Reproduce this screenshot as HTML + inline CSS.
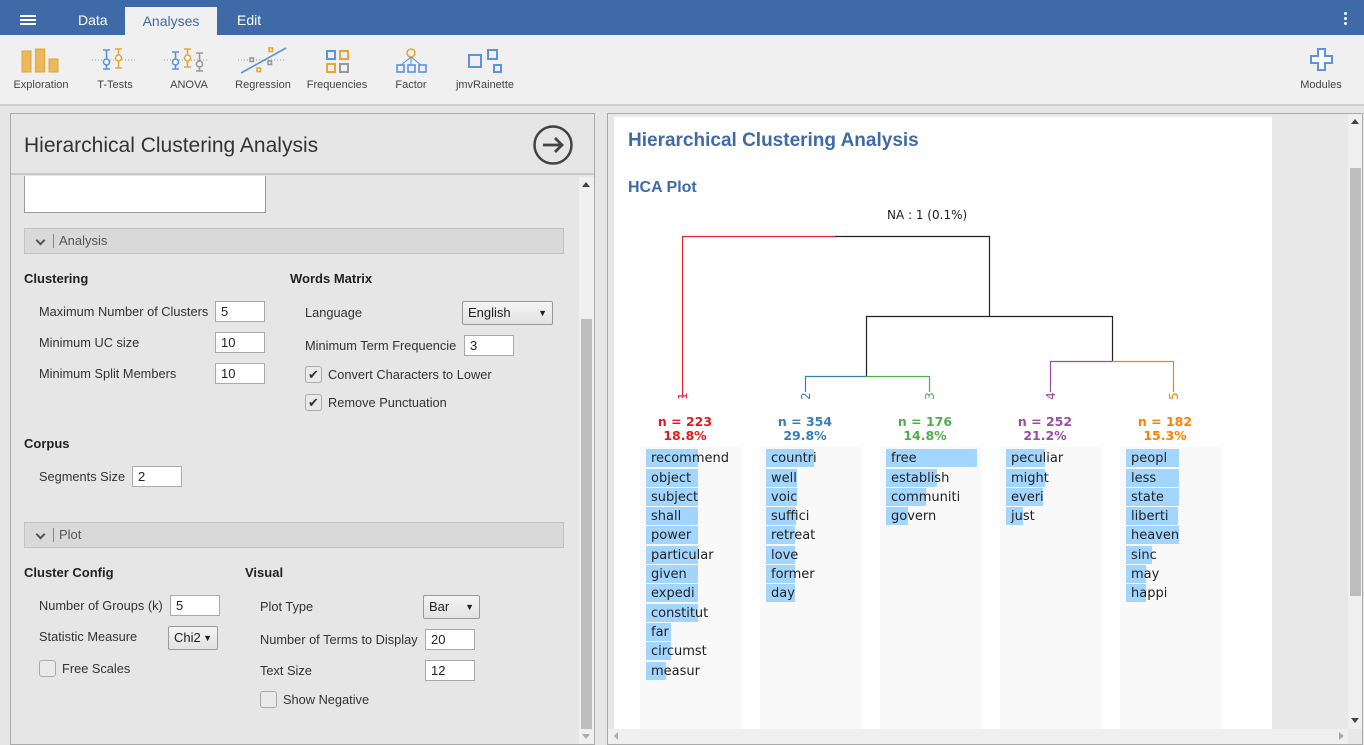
<!DOCTYPE html>
<html><head><meta charset="utf-8"><style>
*{margin:0;padding:0;box-sizing:border-box}
body{width:1364px;height:745px;overflow:hidden;background:#e6e6e6;font-family:"Liberation Sans",sans-serif;font-size:13px;color:#333;position:relative}
.a{position:absolute}
.lbl{position:absolute;line-height:16px;font-size:12.8px;color:#333;white-space:nowrap}
.h{position:absolute;font-weight:bold;font-size:13px;color:#222;line-height:16px}
.in{position:absolute;background:#fff;border:1px solid #aaa;height:21px;font-size:13px;line-height:19px;padding-left:5px;color:#222}
.sel{position:absolute;background:#eee;border:1px solid #999;border-radius:2px;height:24px;font-size:13px;line-height:22px;padding-left:5px;color:#222;background:linear-gradient(#f4f4f4,#e2e2e2)}
.sel:after{content:"▼";position:absolute;right:5px;top:0;font-size:9px}
.cb{position:absolute;width:17px;height:17px;border:1px solid #aaa;border-radius:3px;background:#e9e9e9}
.sec{position:absolute;left:24px;width:540px;height:26px;background:#d9d9d9;border:1px solid #c2c2c2;color:#555;font-size:13px;line-height:24px;padding-left:34px}
.sec:before{content:"";position:absolute;left:12px;top:8px;width:5px;height:5px;border-right:2px solid #555;border-bottom:2px solid #555;transform:rotate(45deg)}
.sec:after{content:"";position:absolute;left:28px;top:5px;width:1px;height:14px;background:#888}
.tb{position:absolute;top:79px;font-size:11px;color:#444;text-align:center;width:80px}
.col{position:absolute;top:447px;width:102px;height:282px;background:#f9f9f9}
.w{position:absolute;height:18px;font-family:"DejaVu Sans",sans-serif;font-size:13px;line-height:18px;color:#222;white-space:nowrap}
.w i{position:absolute;left:0;top:0;height:18px;background:#a3d6ff;z-index:0}
.w span{position:relative;left:5px;top:1px;z-index:1}
.ns{position:absolute;top:415px;width:100px;text-align:center;font-family:"DejaVu Sans",sans-serif;font-size:12.5px;line-height:14px;font-weight:bold}
</style></head><body>
<div class="a" style="left:0;top:0;width:1364px;height:35px;background:#3e6ba8"></div>
<div class="a" style="left:20px;top:15px;width:16px;height:2px;background:#fff;box-shadow:0 4px 0 #fff,0 8px 0 #fff"></div>
<div class="a" style="left:78px;top:12px;color:#fff;font-size:14px">Data</div>
<div class="a" style="left:125px;top:7px;width:92px;height:28px;background:#f0f0f0;color:#3e6ba8;font-size:14px;text-align:center;line-height:28px">Analyses</div>
<div class="a" style="left:237px;top:12px;color:#fff;font-size:14px">Edit</div>
<div class="a" style="left:1344px;top:12px;width:3px;height:3px;background:#fff;border-radius:50%;box-shadow:0 5px 0 #fff,0 10px 0 #fff"></div>
<div class="a" style="left:0;top:35px;width:1364px;height:71px;background:#f0f0f0;border-bottom:2px solid #d0d0d0"></div>
<svg class="a" style="left:0;top:35px" width="1364" height="44">
<g fill="#ecb95a" stroke="#e2a43a"><rect x="22" y="16" width="9" height="21"/><rect x="35.5" y="14" width="9" height="23"/><rect x="49" y="24" width="9" height="13"/></g>
<g stroke="#999" stroke-dasharray="1 2"><line x1="92" y1="25" x2="136" y2="25"/><line x1="164" y1="25" x2="208" y2="25"/><line x1="238" y1="25" x2="286" y2="25"/></g>
<g fill="none" stroke-width="1.6"><path d="M103 15h7M106.5 15v19M103 34h7" stroke="#5b93e0"/><circle cx="106.5" cy="27" r="3" fill="#fff" stroke="#5b93e0"/>
<path d="M115 14h7M118.5 14v19M115 33h7" stroke="#e5a73b"/><circle cx="118.5" cy="23" r="3" fill="#fff" stroke="#e5a73b"/>
<path d="M172 17h7M175.5 17v17M172 34h7" stroke="#5b93e0"/><circle cx="175.5" cy="27" r="3" fill="#fff" stroke="#5b93e0"/>
<path d="M184 14h7M187.5 14v18M184 32h7" stroke="#e5a73b"/><circle cx="187.5" cy="23" r="3" fill="#fff" stroke="#e5a73b"/>
<path d="M196 18h7M199.5 18v18M196 36h7" stroke="#999"/><circle cx="199.5" cy="29" r="3" fill="#fff" stroke="#999"/>
<line x1="241" y1="38" x2="286" y2="13" stroke="#5b93e0"/><rect x="250" y="23" width="3.5" height="3.5" stroke="#999"/><rect x="268" y="26" width="3.5" height="3.5" stroke="#999"/><rect x="257" y="33" width="3.5" height="3.5" stroke="#e5a73b"/><rect x="269" y="13" width="3.5" height="3.5" stroke="#e5a73b"/>
<rect x="327" y="16" width="8" height="8" stroke="#5b93e0" stroke-width="2"/><rect x="340" y="16" width="8" height="8" stroke="#e5a73b" stroke-width="2"/><rect x="327" y="29" width="8" height="8" stroke="#e5a73b" stroke-width="2"/><rect x="340" y="29" width="8" height="8" stroke="#999" stroke-width="2"/>
<circle cx="411" cy="18" r="4" stroke="#e5a73b"/><path d="M411 22v8M411 22l-10 8M411 22l10 8" stroke="#5b93e0" stroke-width="1"/><rect x="397" y="30" width="7" height="7" stroke="#5b93e0"/><rect x="408" y="30" width="7" height="7" stroke="#5b93e0"/><rect x="419" y="30" width="7" height="7" stroke="#5b93e0"/>
<rect x="469" y="20" width="12" height="12" stroke="#5b93e0" stroke-width="2"/><rect x="488" y="15" width="9" height="9" stroke="#5b93e0" stroke-width="2"/><rect x="494" y="30" width="7" height="7" stroke="#5b93e0" stroke-width="2"/>
<path d="M1318 14h7v7h7v7h-7v7h-7v-7h-7v-7h7z" stroke="#5b93e0" stroke-width="2" fill="#fff"/></g>
</svg>
<div class="tb" style="left:1px">Exploration</div><div class="tb" style="left:75px">T-Tests</div><div class="tb" style="left:149px">ANOVA</div><div class="tb" style="left:223px">Regression</div><div class="tb" style="left:297px">Frequencies</div><div class="tb" style="left:371px">Factor</div><div class="tb" style="left:445px">jmvRainette</div><div class="tb" style="left:1281px">Modules</div>
<div class="a" style="left:10px;top:113px;width:585px;height:632px;border:1px solid #aaa;background:#e6e6e6"></div>
<div class="a" style="left:11px;top:114px;width:583px;height:61px;border-bottom:2px solid #c8c8c8"></div>
<div class="a" style="left:24px;top:134px;font-size:21px;color:#333">Hierarchical Clustering Analysis</div>
<svg class="a" style="left:532px;top:124px" width="42" height="42"><circle cx="21" cy="21" r="18.5" fill="none" stroke="#444" stroke-width="2.5"/><path d="M11 21h19M23 14l7 7-7 7" fill="none" stroke="#444" stroke-width="2.8"/></svg>
<div class="a" style="left:579px;top:177px;width:15px;height:567px;background:#f0f0f0"></div>
<div class="a" style="left:581px;top:319px;width:11px;height:410px;background:#bdbdbd"></div>
<div class="a" style="left:582px;top:182px;width:0;height:0;border-left:4px solid transparent;border-right:4px solid transparent;border-bottom:5px solid #444"></div>
<div class="a" style="left:582px;top:734px;width:0;height:0;border-left:4px solid transparent;border-right:4px solid transparent;border-top:5px solid #aaa"></div>
<div class="a" style="left:24px;top:176px;width:242px;height:37px;background:#fff;border:1px solid #999;border-top:none"></div>
<div class="sec" style="top:228px">Analysis</div>
<div class="h" style="left:24px;top:271px">Clustering</div>
<div class="h" style="left:290px;top:271px">Words Matrix</div>
<div class="lbl" style="left:39px;top:304px">Maximum Number of Clusters</div><div class="in" style="left:215px;top:301px;width:50px">5</div>
<div class="lbl" style="left:39px;top:335px">Minimum UC size</div><div class="in" style="left:215px;top:332px;width:50px">10</div>
<div class="lbl" style="left:39px;top:366px">Minimum Split Members</div><div class="in" style="left:215px;top:363px;width:50px">10</div>
<div class="lbl" style="left:305px;top:305px">Language</div><div class="sel" style="left:462px;top:301px;width:91px">English</div>
<div class="lbl" style="left:305px;top:338px">Minimum Term Frequencie</div><div class="in" style="left:464px;top:335px;width:50px">3</div>
<div class="cb" style="left:305px;top:366px;text-align:center;line-height:15px;font-size:13px;color:#333">✔</div><div class="lbl" style="left:328px;top:367px">Convert Characters to Lower</div>
<div class="cb" style="left:305px;top:394px;text-align:center;line-height:15px;font-size:13px;color:#333">✔</div><div class="lbl" style="left:328px;top:395px">Remove Punctuation</div>
<div class="h" style="left:24px;top:436px">Corpus</div>
<div class="lbl" style="left:39px;top:469px">Segments Size</div><div class="in" style="left:132px;top:466px;width:50px">2</div>
<div class="sec" style="top:522px">Plot</div>
<div class="h" style="left:24px;top:565px">Cluster Config</div>
<div class="h" style="left:245px;top:565px">Visual</div>
<div class="lbl" style="left:39px;top:598px">Number of Groups (k)</div><div class="in" style="left:170px;top:595px;width:50px">5</div>
<div class="lbl" style="left:39px;top:629px">Statistic Measure</div><div class="sel" style="left:168px;top:626px;width:50px">Chi2</div>
<div class="cb" style="left:39px;top:660px"></div><div class="lbl" style="left:62px;top:661px">Free Scales</div>
<div class="lbl" style="left:260px;top:599px">Plot Type</div><div class="sel" style="left:423px;top:595px;width:57px">Bar</div>
<div class="lbl" style="left:260px;top:632px">Number of Terms to Display</div><div class="in" style="left:425px;top:629px;width:50px">20</div>
<div class="lbl" style="left:260px;top:663px">Text Size</div><div class="in" style="left:425px;top:660px;width:50px">12</div>
<div class="cb" style="left:260px;top:691px"></div><div class="lbl" style="left:283px;top:692px">Show Negative</div>
<div class="a" style="left:607px;top:113px;width:756px;height:632px;border:1px solid #aaa;background:#e8e8e8"></div>
<div class="a" style="left:614px;top:117px;width:658px;height:612px;background:#fff"></div>
<div class="a" style="left:1348px;top:114px;width:14px;height:615px;background:#f0f0f0"></div>
<div class="a" style="left:1350px;top:168px;width:11px;height:428px;background:#bdbdbd"></div>
<div class="a" style="left:1351px;top:119px;border-left:4px solid transparent;border-right:4px solid transparent;border-bottom:5px solid #444"></div>
<div class="a" style="left:1351px;top:718px;border-left:4px solid transparent;border-right:4px solid transparent;border-top:5px solid #444"></div>
<div class="a" style="left:608px;top:729px;width:740px;height:15px;background:#f0f0f0"></div>
<div class="a" style="left:1339px;top:732px;border-top:4px solid transparent;border-bottom:4px solid transparent;border-left:5px solid #aaa"></div>
<div class="a" style="left:614px;top:732px;border-top:4px solid transparent;border-bottom:4px solid transparent;border-right:4px solid #aaa"></div>
<div class="a" style="left:628px;top:130px;font-size:19px;font-weight:bold;color:#3e6ba8">Hierarchical Clustering Analysis</div>
<div class="a" style="left:628px;top:179px;font-size:16px;font-weight:bold;color:#3e6ba8">HCA Plot</div>
<div class="a" style="left:887px;top:208px;font-family:'DejaVu Sans',sans-serif;font-size:12px;color:#222">NA : 1 (0.1%)</div>
<svg class="a" style="left:0;top:0" width="1364" height="745" fill="none" stroke-width="1.2">
<path d="M682.5 398V236.5H835" stroke="#e8283a"/><path d="M835 236.5H989.5V316.5" stroke="#222"/>
<path d="M866.5 376V316.5H1112.5V361" stroke="#222"/>
<path d="M805.5 392V376.5H866" stroke="#3b7dbf"/><path d="M866 376.5H929.5V392" stroke="#4caf50"/>
<path d="M1050.5 392V361.5H1112" stroke="#984ea3"/><path d="M1112 361.5H1173.5V392" stroke="#ff7f00"/>
<g font-family="DejaVu Sans" font-size="12" stroke="none">
<text transform="translate(687,396) rotate(-90)" fill="#e8283a" text-anchor="middle">1</text>
<text transform="translate(810,396) rotate(-90)" fill="#3b7dbf" text-anchor="middle">2</text>
<text transform="translate(934,396) rotate(-90)" fill="#4caf50" text-anchor="middle">3</text>
<text transform="translate(1055,396) rotate(-90)" fill="#984ea3" text-anchor="middle">4</text>
<text transform="translate(1178,396) rotate(-90)" fill="#ff7f00" text-anchor="middle">5</text></g>
</svg>
<div class="ns" style="left:635px;color:#e41a1c">n = 223<br>18.8%</div>
<div class="ns" style="left:755px;color:#377eb8">n = 354<br>29.8%</div>
<div class="ns" style="left:875px;color:#4daf4a">n = 176<br>14.8%</div>
<div class="ns" style="left:995px;color:#984ea3">n = 252<br>21.2%</div>
<div class="ns" style="left:1115px;color:#ff7f00">n = 182<br>15.3%</div>
<div class="col" style="left:640px"></div><div class="col" style="left:760px"></div><div class="col" style="left:880px"></div><div class="col" style="left:1000px"></div><div class="col" style="left:1120px"></div>
<div class="w" style="left:646px;top:449px"><i style="width:52px"></i><span>recommend</span></div>
<div class="w" style="left:646px;top:469px"><i style="width:52px"></i><span>object</span></div>
<div class="w" style="left:646px;top:488px"><i style="width:52px"></i><span>subject</span></div>
<div class="w" style="left:646px;top:507px"><i style="width:52px"></i><span>shall</span></div>
<div class="w" style="left:646px;top:526px"><i style="width:52px"></i><span>power</span></div>
<div class="w" style="left:646px;top:546px"><i style="width:52px"></i><span>particular</span></div>
<div class="w" style="left:646px;top:565px"><i style="width:52px"></i><span>given</span></div>
<div class="w" style="left:646px;top:584px"><i style="width:52px"></i><span>expedi</span></div>
<div class="w" style="left:646px;top:604px"><i style="width:52px"></i><span>constitut</span></div>
<div class="w" style="left:646px;top:623px"><i style="width:25px"></i><span>far</span></div>
<div class="w" style="left:646px;top:642px"><i style="width:25px"></i><span>circumst</span></div>
<div class="w" style="left:646px;top:662px"><i style="width:20px"></i><span>measur</span></div>
<div class="w" style="left:766px;top:449px"><i style="width:48px"></i><span>countri</span></div>
<div class="w" style="left:766px;top:469px"><i style="width:31px"></i><span>well</span></div>
<div class="w" style="left:766px;top:488px"><i style="width:31px"></i><span>voic</span></div>
<div class="w" style="left:766px;top:507px"><i style="width:30px"></i><span>suffici</span></div>
<div class="w" style="left:766px;top:526px"><i style="width:29px"></i><span>retreat</span></div>
<div class="w" style="left:766px;top:546px"><i style="width:29px"></i><span>love</span></div>
<div class="w" style="left:766px;top:565px"><i style="width:29px"></i><span>former</span></div>
<div class="w" style="left:766px;top:584px"><i style="width:29px"></i><span>day</span></div>
<div class="w" style="left:886px;top:449px"><i style="width:91px"></i><span>free</span></div>
<div class="w" style="left:886px;top:469px"><i style="width:51px"></i><span>establish</span></div>
<div class="w" style="left:886px;top:488px"><i style="width:40px"></i><span>communiti</span></div>
<div class="w" style="left:886px;top:507px"><i style="width:22px"></i><span>govern</span></div>
<div class="w" style="left:1006px;top:449px"><i style="width:39px"></i><span>peculiar</span></div>
<div class="w" style="left:1006px;top:469px"><i style="width:39px"></i><span>might</span></div>
<div class="w" style="left:1006px;top:488px"><i style="width:37px"></i><span>everi</span></div>
<div class="w" style="left:1006px;top:507px"><i style="width:17px"></i><span>just</span></div>
<div class="w" style="left:1126px;top:449px"><i style="width:53px"></i><span>peopl</span></div>
<div class="w" style="left:1126px;top:469px"><i style="width:53px"></i><span>less</span></div>
<div class="w" style="left:1126px;top:488px"><i style="width:53px"></i><span>state</span></div>
<div class="w" style="left:1126px;top:507px"><i style="width:52px"></i><span>liberti</span></div>
<div class="w" style="left:1126px;top:526px"><i style="width:53px"></i><span>heaven</span></div>
<div class="w" style="left:1126px;top:546px"><i style="width:26px"></i><span>sinc</span></div>
<div class="w" style="left:1126px;top:565px"><i style="width:20px"></i><span>may</span></div>
<div class="w" style="left:1126px;top:584px"><i style="width:20px"></i><span>happi</span></div>
</body></html>
